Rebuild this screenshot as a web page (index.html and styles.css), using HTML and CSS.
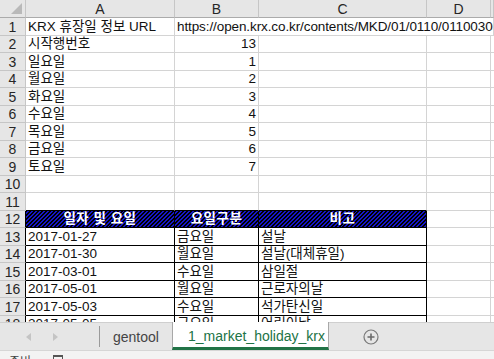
FILE: index.html
```html
<!DOCTYPE html>
<html lang="ko">
  <head>
    <meta charset="UTF-8" />
    <meta name="viewport" content="width=device-width, initial-scale=1.0" />
    <title>1_market_holiday_krx</title>
    <link rel="stylesheet" href="styles.css">
  </head>
  <body>
    <div class="sheet">
      <div class="row head">
        <div class="c rn corner"></div>
        <div class="c ch">A</div>
        <div class="c ch">B</div>
        <div class="c ch">C</div>
        <div class="c ch">D</div>
        <div class="c ch"></div>
      </div>
      <div class="row">
        <div class="c rn">1</div>
        <div class="c">KRX 휴장일 정보 URL</div>
        <div class="c url">https://open.krx.co.kr/contents/MKD/01/0110/01100305/MKD01100305.jsp</div>
      </div>
      <div class="row">
        <div class="c rn">2</div>
        <div class="c">시작행번호</div>
        <div class="c num">13</div>
        <div class="c"></div><div class="c"></div><div class="c"></div>
      </div>
      <div class="row">
        <div class="c rn">3</div>
        <div class="c">일요일</div>
        <div class="c num">1</div>
        <div class="c"></div><div class="c"></div><div class="c"></div>
      </div>
      <div class="row">
        <div class="c rn">4</div>
        <div class="c">월요일</div>
        <div class="c num">2</div>
        <div class="c"></div><div class="c"></div><div class="c"></div>
      </div>
      <div class="row">
        <div class="c rn">5</div>
        <div class="c">화요일</div>
        <div class="c num">3</div>
        <div class="c"></div><div class="c"></div><div class="c"></div>
      </div>
      <div class="row">
        <div class="c rn">6</div>
        <div class="c">수요일</div>
        <div class="c num">4</div>
        <div class="c"></div><div class="c"></div><div class="c"></div>
      </div>
      <div class="row">
        <div class="c rn">7</div>
        <div class="c">목요일</div>
        <div class="c num">5</div>
        <div class="c"></div><div class="c"></div><div class="c"></div>
      </div>
      <div class="row">
        <div class="c rn">8</div>
        <div class="c">금요일</div>
        <div class="c num">6</div>
        <div class="c"></div><div class="c"></div><div class="c"></div>
      </div>
      <div class="row">
        <div class="c rn">9</div>
        <div class="c">토요일</div>
        <div class="c num">7</div>
        <div class="c"></div><div class="c"></div><div class="c"></div>
      </div>
      <div class="row">
        <div class="c rn">10</div>
        <div class="c"></div><div class="c"></div><div class="c"></div><div class="c"></div><div class="c"></div>
      </div>
      <div class="row">
        <div class="c rn">11</div>
        <div class="c above"></div><div class="c above"></div><div class="c above"></div><div class="c"></div><div class="c"></div>
      </div>
      <div class="row">
        <div class="c rn edge">12</div>
        <div class="c th">일자 및 요일</div>
        <div class="c th">요일구분</div>
        <div class="c th">비고</div>
        <div class="c"></div><div class="c"></div>
      </div>
      <div class="row">
        <div class="c rn edge">13</div>
        <div class="c td">2017-01-27</div>
        <div class="c td">금요일</div>
        <div class="c td">설날</div>
        <div class="c"></div><div class="c"></div>
      </div>
      <div class="row">
        <div class="c rn edge">14</div>
        <div class="c td">2017-01-30</div>
        <div class="c td">월요일</div>
        <div class="c td">설날(대체휴일)</div>
        <div class="c"></div><div class="c"></div>
      </div>
      <div class="row">
        <div class="c rn edge">15</div>
        <div class="c td">2017-03-01</div>
        <div class="c td">수요일</div>
        <div class="c td">삼일절</div>
        <div class="c"></div><div class="c"></div>
      </div>
      <div class="row">
        <div class="c rn edge">16</div>
        <div class="c td">2017-05-01</div>
        <div class="c td">월요일</div>
        <div class="c td">근로자의날</div>
        <div class="c"></div><div class="c"></div>
      </div>
      <div class="row">
        <div class="c rn edge">17</div>
        <div class="c td">2017-05-03</div>
        <div class="c td">수요일</div>
        <div class="c td">석가탄신일</div>
        <div class="c"></div><div class="c"></div>
      </div>
      <div class="row">
        <div class="c rn edge">18</div>
        <div class="c td">2017-05-05</div>
        <div class="c td">금요일</div>
        <div class="c td">어린이날</div>
        <div class="c"></div><div class="c"></div>
      </div>
    </div>

    <div class="tabs">
      <div class="nav">
        <span class="arrow left"></span>
        <span class="arrow right"></span>
      </div>
      <div class="tab">gentool</div>
      <div class="tab active">1_market_holiday_krx</div>
      <div class="add">
        <svg width="16" height="16" viewBox="0 0 16 16">
          <circle cx="8" cy="8" r="7" fill="none" stroke="#7a7a7a" stroke-width="1.2" />
          <path d="M8 4.5v7M4.5 8h7" stroke="#6a6a6a" stroke-width="1.6" />
        </svg>
      </div>
    </div>

    <div class="status">
      <span class="ready">준비</span>
      <span class="rec"></span>
    </div>
  </body>
</html>
```

FILE: styles.css
```css
body {
  margin: 0;
  width: 494px;
  height: 359px;
  overflow: hidden;
  background-color: white;
  font-family: "Liberation Sans", "Noto Sans CJK KR", Arial, sans-serif;
  font-size: 13.5px;
  color: #111;
}

.sheet {
  height: 322px;
  overflow: hidden;
}

.row {
  display: grid;
  grid-template-columns: 26px 149px 84px 168px 64px 1fr;
  height: 17.5px;
}

.row.head {
  height: 18px;
}

.c {
  box-sizing: border-box;
  border-right: 1px solid #d4d4d4;
  border-bottom: 1px solid #d4d4d4;
  padding: 0 2px;
  white-space: nowrap;
  overflow: hidden;
  display: flex;
  align-items: flex-end;
  line-height: 16px;
}

/* row and column headers */
.rn,
.ch {
  background-color: #e6e6e6;
  border-color: #c6c6c6;
  justify-content: center;
  color: #262626;
  padding: 0;
  font-size: 14px;
}

.head .c {
  border-bottom-color: #ababab;
}

.corner {
  position: relative;
}

.corner::after {
  content: "";
  position: absolute;
  right: 3px;
  bottom: 3px;
  border-left: 11px solid transparent;
  border-bottom: 11px solid #b9b9b9;
}

.num {
  justify-content: flex-end;
}

.url {
  grid-column: 3 / -1;
  overflow: hidden;
  letter-spacing: -0.1px;
}

/* holiday table */
.above {
  border-bottom-color: #000;
}

.rn.edge {
  border-right-color: #000;
}

.th {
  background: repeating-linear-gradient(135deg, #000 0 1.4px, #1616c8 1.4px 2.8px);
  color: white;
  font-weight: bold;
  justify-content: center;
  border-right-color: #000;
  border-bottom-color: #000;
  letter-spacing: 0.5px;
}

.td {
  border-right-color: #000;
  border-bottom-color: #000;
}

/* sheet tabs */
.tabs {
  height: 28px;
  box-sizing: border-box;
  background-color: #e6e6e6;
  border-top: 1px solid #cfcfcf;
  display: flex;
  font-family: "Liberation Sans", Arial, sans-serif;
  font-size: 14px;
}

.nav {
  width: 100px;
  flex: none;
  display: flex;
  align-items: center;
  gap: 22px;
  padding-left: 26px;
  box-sizing: border-box;
  border-right: 1px solid #9a9a9a;
  margin: 3px 0 3px;
}

.arrow {
  width: 0;
  height: 0;
  border-top: 4px solid transparent;
  border-bottom: 4px solid transparent;
}

.arrow.left {
  border-right: 5px solid #c4c4c4;
}

.arrow.right {
  border-left: 5px solid #c4c4c4;
}

.tab {
  flex: none;
  width: 72px;
  box-sizing: border-box;
  padding: 0 0 0 13px;
  display: flex;
  align-items: center;
  color: #444;
}

.tab.active {
  width: 157px;
  background-color: white;
  color: #217346;
  border-left: 1px solid #a8a8a8;
  border-right: 1px solid #a8a8a8;
  border-bottom: 3px solid #217346;
  margin-top: -1px;
  padding: 2px 0 0 15px;
}

.add {
  padding-left: 34px;
  display: flex;
  align-items: center;
}

/* status bar */
.status {
  height: 9px;
  background-color: #f3f3f3;
  border-top: 1px solid #d6d6d6;
  display: flex;
  gap: 22px;
  padding-left: 9px;
  font-size: 12px;
  line-height: 14px;
  color: #444;
  overflow: hidden;
  font-family: "Noto Sans CJK KR", sans-serif;
}

.ready {
  margin-top: 3px;
}

.rec {
  width: 10px;
  height: 9px;
  margin-top: 4px;
  box-sizing: border-box;
  border: 1px solid #555;
  border-top-width: 2px;
}
```
